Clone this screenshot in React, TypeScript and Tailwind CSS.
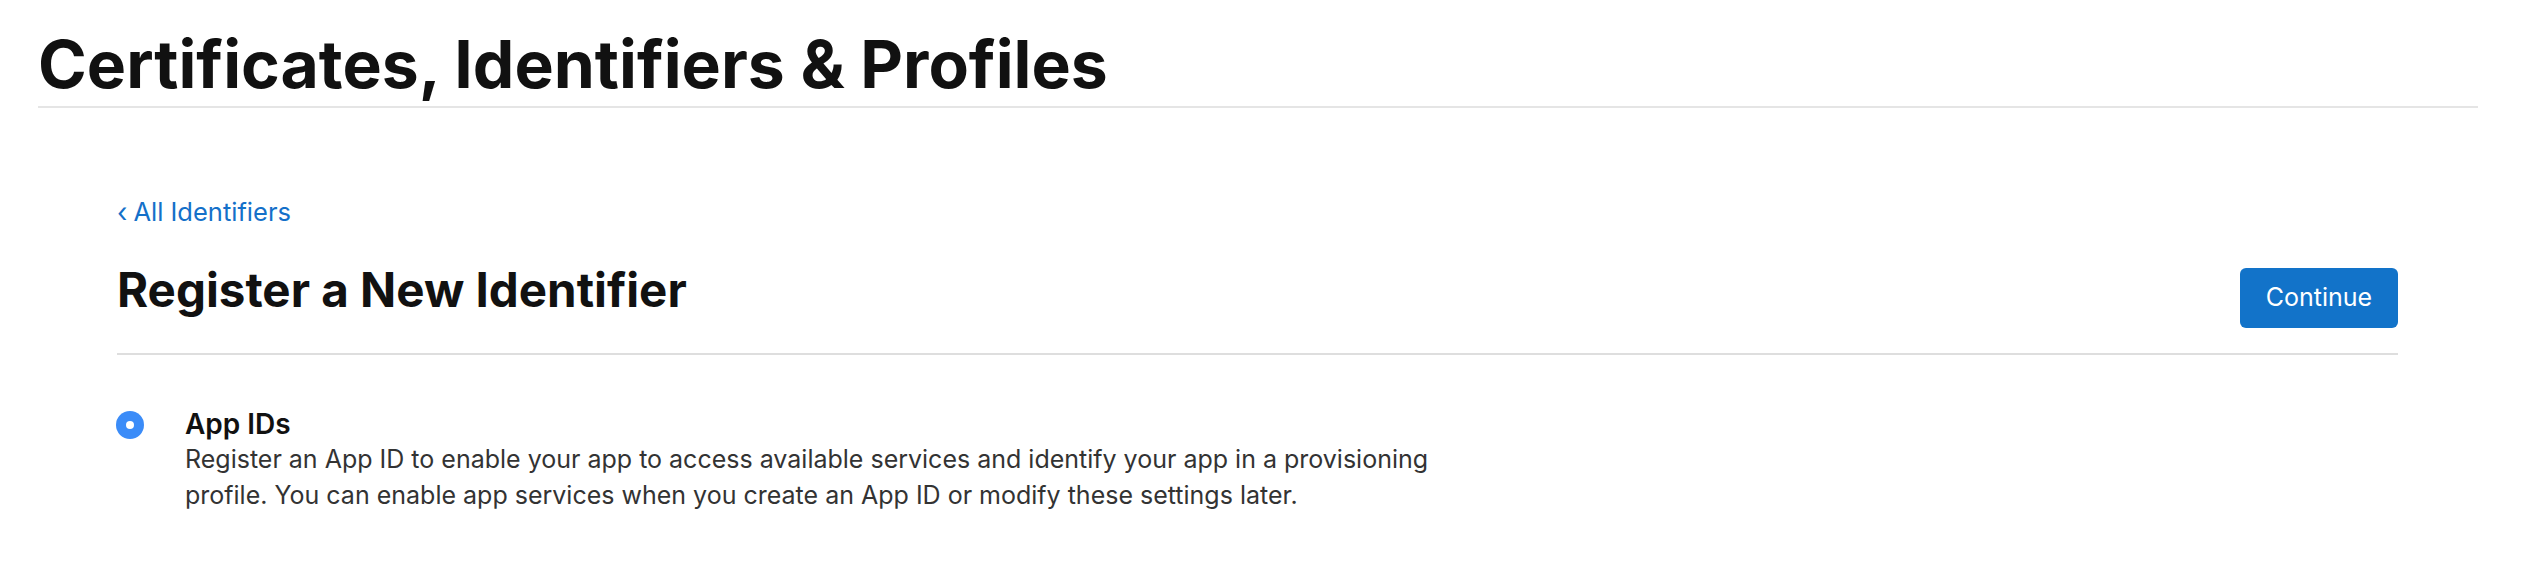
export default function App() {
  return (
    <div className="min-h-screen bg-white text-[#111111]" style={{ fontFamily: "Inter, 'Noto Sans', sans-serif" }}>
      <header className="ml-[38px] mr-[44px] border-b-2 border-[#e5e5e5] pt-[25px] pb-[3px]">
        <h1 className="text-[66px] font-bold leading-[78px]">Certificates, Identifiers &amp; Profiles</h1>
      </header>

      <main className="ml-[117px] mr-[124px] pt-[89px]">
        <a href="#" className="flex items-center gap-[6px] text-[25.5px] leading-[30px] text-[#1470c9]">
          <span className="text-[27px] leading-none">‹</span>
          <span>All Identifiers</span>
        </a>

        <div className="flex items-start justify-between mt-[29px] pb-[25px] border-b-2 border-[#dedede]">
          <h2 className="mt-[6px] text-[47.5px] font-bold leading-[56px]">Register a New Identifier</h2>
          <button className="mt-[12px] h-[60px] w-[158px] rounded-[6px] bg-[#1273c9] text-[25px] text-white">Continue</button>
        </div>

        <div className="flex items-start gap-[41px] mt-[52px] -ml-[1px]">
          <span className="mt-[4px] flex h-[28px] w-[28px] shrink-0 items-center justify-center rounded-full bg-[#3b8cf8]">
            <span className="h-[8px] w-[8px] rounded-full bg-white" />
          </span>
          <div className="max-w-[1285px]">
            <div className="text-[28px] font-semibold leading-[34px]">App IDs</div>
            <p className="text-[25px] leading-[36px] text-[#333333]">
              Register an App ID to enable your app to access available services and identify your app in a provisioning profile. You can enable app services when you create an App ID or modify these settings later.
            </p>
          </div>
        </div>
      </main>
    </div>
  );
}
